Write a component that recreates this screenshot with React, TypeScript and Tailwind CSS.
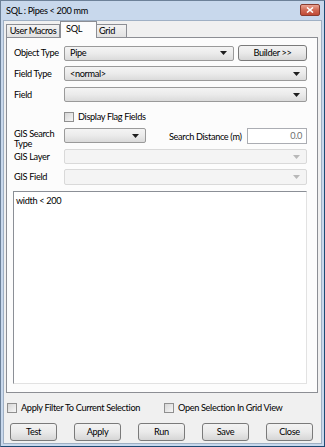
import React from 'react';

const font = { fontFamily: 'Lato, "Liberation Sans", sans-serif' };
const txt = 'text-[9.2px] tracking-[-0.35px] leading-none text-black whitespace-nowrap';

const Caret: React.FC<{ disabled?: boolean }> = ({ disabled }) => (
    <svg width="7" height="4" viewBox="0 0 7 4" className="shrink-0">
        <path d="M0 0 H7 L3.5 4 Z" fill={disabled ? '#b8b8b8' : '#1e1e1e'} />
    </svg>
);

const Select: React.FC<{ value?: string; className?: string; disabled?: boolean }> = ({ value, className, disabled }) => (
    <div
        className={`flex shrink-0 items-center justify-between rounded-[2px] border pl-[5px] pr-[6px] ${
            disabled
                ? 'border-[#d9d9d9] bg-[#f4f4f4]'
                : 'border-[#9a9a9a] bg-gradient-to-b from-[#f4f4f4] via-[#ebebeb] to-[#dbdbdb]'
        } ${className || ''}`}
    >
        <span className={txt}>{value}</span>
        <Caret disabled={disabled} />
    </div>
);

const Button: React.FC<{ label: string; className?: string }> = ({ label, className }) => (
    <button
        className={`flex shrink-0 items-center justify-center rounded-[3px] border border-[#7a7a7a] bg-gradient-to-b from-[#f3f3f3] via-[#eaeaea] to-[#d6d6d6] ${txt} ${className || ''}`}
    >
        {label}
    </button>
);

const Check: React.FC<{ label: string }> = ({ label }) => (
    <label className={`flex items-center gap-[4px] ${txt}`}>
        <span className="h-[10px] w-[10px] shrink-0 border border-[#8f8f8f] bg-gradient-to-br from-[#d6d6d6] to-[#f6f6f6]" />
        {label}
    </label>
);

const Label: React.FC<{ children: React.ReactNode }> = ({ children }) => (
    <span className={`w-[51px] shrink-0 pl-[1px] ${txt}`}>{children}</span>
);

const App: React.FC = () => {
    return (
        <div style={font} className="h-[447px] w-[325px] overflow-hidden">
            <div className="flex h-full w-full flex-col border border-[#6d8198] border-r-[#1d4a73] border-b-[#1d4a73] bg-[#c8d8ec] px-[2px] pb-[2px]">
                {/* title bar */}
                <div className="flex h-[19px] shrink-0 items-start justify-between pl-[3px] pr-[2px]">
                    <span className={`mt-[5px] ${txt}`}>SQL : Pipes &lt; 200 mm</span>
                    <div className="mt-[3px] flex h-[12px] w-[20px] items-center justify-center rounded-[2px] border border-[#8a3d30] bg-gradient-to-b from-[#e9a494] via-[#d06a55] to-[#c04a36]">
                        <svg width="8" height="6" viewBox="0 0 8 6">
                            <path d="M1 0.5 L7 5.5 M7 0.5 L1 5.5" stroke="#fff" strokeWidth="1.6" />
                        </svg>
                    </div>
                </div>

                {/* client area */}
                <div className="flex flex-1 flex-col border border-[#9fb0c4] bg-[#f0f0f0]">
                    {/* tabs */}
                    <div className="flex h-[16px] shrink-0 items-end pl-[2px]">
                        <div className={`flex h-[13px] w-[54px] items-center justify-center border border-b-0 border-[#8c8e94] bg-gradient-to-b from-[#f3f3f3] to-[#e2e2e2] ${txt}`}>
                            User Macros
                        </div>
                        <div className={`relative z-10 -mb-[1px] flex h-[17px] w-[37px] items-start border border-b-0 border-[#8c8e94] bg-[#fcfcfc] pl-[5px] pt-[2px] ${txt}`}>
                            SQL
                        </div>
                        <div className={`flex h-[13px] w-[30px] items-center border border-b-0 border-l-0 border-[#8c8e94] bg-gradient-to-b from-[#f3f3f3] to-[#e2e2e2] pl-[2px] ${txt}`}>
                            Grid
                        </div>
                    </div>

                    {/* tab panel */}
                    <div className="ml-[2px] flex h-[356px] w-[312px] shrink-0 flex-col border border-[#8c8e94] bg-[#fcfcfc] pl-[6px] pt-[7px]">
                        <div className="flex h-[16px] items-center">
                            <Label>Object Type</Label>
                            <Select value="Pipe" className="h-[15px] w-[170px]" />
                            <Button label="Builder >>" className="ml-[4px] h-[16px] w-[69px]" />
                        </div>
                        <div className="mt-[5px] flex h-[15px] items-center">
                            <Label>Field Type</Label>
                            <Select value="<normal>" className="h-[15px] w-[243px]" />
                        </div>
                        <div className="mt-[6px] flex h-[15px] items-center">
                            <Label>Field</Label>
                            <Select className="h-[15px] w-[243px]" />
                        </div>
                        <div className="mt-[10px] flex h-[10px] items-center pl-[51px]">
                            <Check label="Display Flag Fields" />
                        </div>
                        <div className="mt-[6px] flex h-[16px] items-start">
                            <span className="w-[51px] shrink-0 whitespace-nowrap pl-[1px] pt-[1px] text-[9.2px] leading-[10px] tracking-[-0.35px] text-black">
                                GIS Search
                                <br />
                                Type
                            </span>
                            <Select className="h-[15px] w-[82px]" />
                            <span className={`ml-[23px] mt-[4px] w-[78px] shrink-0 ${txt}`}>Search Distance (m)</span>
                            <div className="h-[16px] w-[60px] shrink-0 border border-[#abadb3] bg-white pr-[4px] text-right text-[9.2px] leading-[14px] tracking-[-0.35px] text-[#707070]">
                                0.0
                            </div>
                        </div>
                        <div className="mt-[5px] flex h-[15px] items-center">
                            <Label>GIS Layer</Label>
                            <Select disabled className="h-[15px] w-[243px]" />
                        </div>
                        <div className="mt-[5px] flex h-[16px] items-center">
                            <Label>GIS Field</Label>
                            <Select disabled className="h-[16px] w-[243px]" />
                        </div>
                        <div className={`mt-[6px] h-[193px] w-[294px] border border-[#8b8f96] border-b-[#e2e2e2] border-r-[#e2e2e2] bg-white pl-[2px] pt-[4px] ${txt}`}>
                            width &lt; 200
                        </div>
                    </div>

                    {/* options */}
                    <div className="mt-[10px] flex h-[10px] shrink-0 items-center pl-[3px]">
                        <div className="w-[157px] shrink-0">
                            <Check label="Apply Filter To Current Selection" />
                        </div>
                        <Check label="Open Selection In Grid View" />
                    </div>

                    {/* buttons */}
                    <div className="mt-[10px] flex shrink-0 items-center gap-[17px] pl-[6px]">
                        <Button label="Test" className="h-[18px] w-[47px]" />
                        <Button label="Apply" className="h-[18px] w-[47px]" />
                        <Button label="Run" className="h-[18px] w-[47px]" />
                        <Button label="Save" className="h-[18px] w-[47px]" />
                        <Button label="Close" className="h-[18px] w-[47px]" />
                    </div>
                </div>
            </div>
        </div>
    );
};

export default App;
